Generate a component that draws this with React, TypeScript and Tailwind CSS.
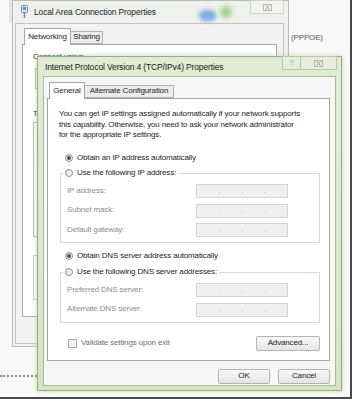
import React from "react";

const font = "font-['Liberation_Sans',Arial,sans-serif]";

function Radio({ checked }: { checked?: boolean }) {
  return (
    <span className="flex h-[8px] w-[8px] shrink-0 items-center justify-center rounded-full border border-[#909090] bg-gradient-to-br from-[#dcdcdc] to-[#ffffff]">
      {checked && <span className="h-[4px] w-[4px] rounded-full bg-[#505050]" />}
    </span>
  );
}

function IpField() {
  return (
    <div className="flex h-[14px] w-[92px] items-end border border-[#d4d4d4] bg-[#efefef] pb-[3px] text-[7px] leading-[7px] text-[#a0a0a0]">
      <span className="flex-1" />
      <span>.</span>
      <span className="flex-1" />
      <span>.</span>
      <span className="flex-1" />
      <span>.</span>
      <span className="flex-1" />
    </div>
  );
}

function Row({ label }: { label: string }) {
  return (
    <div className="flex h-[14px] items-center">
      <span className="w-[135px] pl-[6px] text-[#8e8e8e]">{label}</span>
      <IpField />
    </div>
  );
}

function Group({ legend, rows }: { legend: string; rows: string[] }) {
  return (
    <fieldset className="ml-[12px] w-[260px] border border-[#d5dbe0] px-0 pb-[5px] pt-[5px]">
      <legend className="ml-[2px] flex h-[12px] items-center gap-[4px] px-[2px]">
        <Radio />
        <span>{legend}</span>
      </legend>
      <div className="flex flex-col gap-[5.5px]">
        {rows.map((r) => (
          <Row key={r} label={r} />
        ))}
      </div>
    </fieldset>
  );
}

function Button({ label, w }: { label: string; w: string }) {
  return (
    <div
      className={`${w} flex h-[15px] items-center justify-center rounded-[2px] border border-[#b4b4b4] bg-gradient-to-b from-[#f8f8f8] to-[#e4e4e4] text-[#222]`}
    >
      {label}
    </div>
  );
}

function CloseGlyph() {
  return (
    <svg width="9" height="7" viewBox="0 0 9 7">
      <rect x="0.5" y="0.5" width="8" height="6" fill="none" stroke="#b5b5b5" />
      <path d="M2.5 1.5 L6.5 5.5 M6.5 1.5 L2.5 5.5" stroke="#9a9a9a" strokeWidth="1" />
    </svg>
  );
}

function NetIcon() {
  return (
    <svg width="9" height="14" viewBox="0 0 9 14">
      <rect x="1.5" y="0.5" width="6" height="7" rx="1" fill="#dfe6ee" stroke="#6f88a6" />
      <rect x="3" y="2" width="3" height="3" fill="#5c8fd0" />
      <path d="M4.5 8 V13" stroke="#7b8fa8" strokeWidth="1.5" />
    </svg>
  );
}

export default function App() {
  return (
    <div
      className={`${font} relative h-[404px] w-[356px] overflow-hidden bg-white text-[8px] leading-[10.5px] tracking-[-0.15px] text-[#1e1e1e]`}
    >
      {/* window behind everything */}
      <div className="absolute left-0 top-0 h-[399px] w-[352px] border-b-2 border-r-2 border-[#4a4a4a] bg-[#f9f9f9]">
        <div className="absolute left-[9px] top-0 h-[22px] w-[3px] bg-[#e4e4e4]" />
        <div className="absolute left-[291px] top-[33px] text-[#5a5a5a]">(PPPOE)</div>
        <div className="absolute left-0 top-[375px] w-[40px] border-t-2 border-dotted border-[#8a8a8a]" />
      </div>

      {/* Local Area Connection Properties */}
      <div className="absolute left-[12px] top-0 flex h-[347px] w-[277px] flex-col border border-[#b9beb2] bg-[#eff1ec]">
        <div className="relative flex h-[22px] items-start">
          <div className="absolute left-[186px] top-[9px] h-[11px] w-[17px] rounded-full bg-[#4f8fdc] opacity-70 blur-[2px]" />
          <div className="absolute left-[207px] top-[5px] h-[12px] w-[12px] rounded-full bg-[#7ec86a] opacity-70 blur-[2px]" />
          <div className="ml-[7px] mt-[4px]">
            <NetIcon />
          </div>
          <span className="ml-[5px] mt-[6px] text-[8.5px] text-[#222]">Local Area Connection Properties</span>
          <div className="ml-auto mr-[4px] -mt-px flex h-[14px] w-[34px] items-center justify-center border border-[#cfd3ca] bg-[#f3f4f0]">
            <CloseGlyph />
          </div>
        </div>
        <div className="ml-[2px] mr-[4px] flex h-[321px] flex-col border border-[#c4c4c4] bg-[#f3f3f3]">
          <div className="ml-[8px] mt-[3px] flex h-[17px] items-end">
            <div className="relative z-10 -mb-px flex h-[17px] w-[47px] items-center justify-center border border-b-0 border-[#a8a8a8] bg-white">
              Networking
            </div>
            <div className="flex h-[13px] w-[32px] items-center justify-center border border-l-0 border-[#b0b0b0] bg-[#ebebeb]">
              Sharing
            </div>
          </div>
          <div className="ml-[6px] h-[273px] w-[255px] border border-[#a8a8a8] bg-white pl-[10px] pt-[7px]">
            <div>Connect using:</div>
            <div className="ml-[2px] mt-[5px] h-[21px] w-[235px] border border-[#b8b8b8] bg-[#f7f7f7]" />
            <div className="mt-[20px]">This connection uses the following items:</div>
            <div className="mt-[3px] h-[115px] w-[237px] border border-[#b8b8b8]" />
            <div className="mt-[18px] h-[45px] w-[237px] border border-[#d0d0d0]" />
          </div>
        </div>
      </div>

      {/* Internet Protocol Version 4 (TCP/IPv4) Properties */}
      <div className="absolute left-[37px] top-[56px] flex h-[335px] w-[305px] flex-col border border-[#98aa86] bg-gradient-to-b from-[#e1ebd3] to-[#d6e4c2] shadow-[0_0_5px_rgba(160,200,120,0.6)]">
        <div className="flex h-[19px] items-start">
          <span className="ml-[7px] mt-[5px] text-[8.5px] text-[#1a1a1a]">
            Internet Protocol Version 4 (TCP/IPv4) Properties
          </span>
          <div className="ml-auto mr-[4px] -mt-px flex">
            <div className="flex h-[14px] w-[19px] items-center justify-center border border-[#bac7a9] bg-[#e6eedb] text-[8px] text-[#9aa58c]">
              ?
            </div>
            <div className="flex h-[14px] w-[36px] items-center justify-center border border-l-0 border-[#bac7a9] bg-[#e6eedb]">
              <CloseGlyph />
            </div>
          </div>
        </div>
        <div className="mx-[5px] flex h-[310px] flex-col border border-[#aab79b] bg-[#f6f6f6]">
          <div className="ml-[5px] mt-[4px] flex h-[17px] items-end">
            <div className="relative z-10 -mb-px flex h-[17px] w-[36px] items-center justify-center border border-b-0 border-[#a5a5a5] bg-white">
              General
            </div>
            <div className="flex h-[13px] w-[89px] items-center justify-center border border-l-0 border-[#b0b0b0] bg-[#ececec]">
              Alternate Configuration
            </div>
          </div>
          <div className="ml-[3px] flex h-[263px] w-[283px] flex-col border border-[#a5a5a5] bg-white pt-[10px]">
            <div className="pl-[11px]">
              <div>You can get IP settings assigned automatically if your network supports</div>
              <div>this capability. Otherwise, you need to ask your network administrator</div>
              <div>for the appropriate IP settings.</div>
            </div>
            <div className="ml-[17px] mt-[11.5px] flex h-[12px] items-center gap-[4px]">
              <Radio checked />
              <span>Obtain an IP address automatically</span>
            </div>
            <div className="mt-[3px]">
              <Group
                legend="Use the following IP address:"
                rows={["IP address:", "Subnet mask:", "Default gateway:"]}
              />
            </div>
            <div className="ml-[17px] mt-[7px] flex h-[12px] items-center gap-[4px]">
              <Radio checked />
              <span>Obtain DNS server address automatically</span>
            </div>
            <div className="mt-[4px]">
              <Group
                legend="Use the following DNS server addresses:"
                rows={["Preferred DNS server:", "Alternate DNS server:"]}
              />
            </div>
            <div className="mt-[13.5px] flex h-[15px] items-center pl-[20px] pr-[9px]">
              <span className="h-[9px] w-[9px] border border-[#a9a9a9] bg-[#f2f2f2]" />
              <span className="ml-[4px] text-[#707070]">Validate settings upon exit</span>
              <div className="ml-auto">
                <Button label="Advanced..." w="w-[64px]" />
              </div>
            </div>
          </div>
          <div className="ml-[3px] mt-[8px] flex w-[283px] justify-end gap-[8px]">
            <Button label="OK" w="w-[52px]" />
            <Button label="Cancel" w="w-[52px]" />
          </div>
        </div>
      </div>
    </div>
  );
}
